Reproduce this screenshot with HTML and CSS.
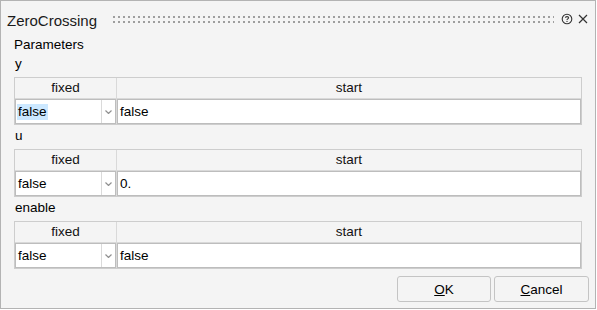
FILE: index.html
```html
<!DOCTYPE html>
<html>
<head>
<meta charset="utf-8">
<link rel="stylesheet" href="styles.css">
</head>
<body>
<div class="window">
  <div class="titlebar">
    <span class="title">ZeroCrossing</span>
    <svg class="grip" height="7" preserveAspectRatio="none">
      <defs>
        <pattern id="dots" width="5" height="5" patternUnits="userSpaceOnUse">
          <rect x="0" y="0" width="2" height="2" fill="#9e9e9e"/>
        </pattern>
      </defs>
      <rect x="0" y="0" width="100%" height="7" fill="url(#dots)"/>
    </svg>
    <svg class="help" width="12" height="12" viewBox="0 0 12 12">
      <circle cx="6" cy="6" r="4.8" fill="none" stroke="#333" stroke-width="1.1"/>
      <path d="M4.4 4.8 C4.4 3.2 7.6 3.2 7.6 4.8 C7.6 6 6 5.8 6 7.1" fill="none" stroke="#333" stroke-width="1.1"/>
      <rect x="5.45" y="7.9" width="1.1" height="1.1" fill="#333"/>
    </svg>
    <svg class="close" width="12" height="12" viewBox="0 0 12 12">
      <path d="M2 2 L10 10 M10 2 L2 10" stroke="#333" stroke-width="1.2" fill="none"/>
    </svg>
  </div>
  <div class="content">
    <div class="section">Parameters</div>

    <div class="label">y</div>
    <div class="ptable">
      <div class="hcell">fixed</div>
      <div class="hcell">start</div>
      <div class="combo"><span class="val selected">false</span><span class="arrow"><svg width="7" height="4" viewBox="0 0 7 4"><path d="M0.5 0.5 L3.5 3.5 L6.5 0.5" fill="none" stroke="#909090" stroke-width="1.2"/></svg></span></div>
      <div class="field">false</div>
    </div>

    <div class="label">u</div>
    <div class="ptable">
      <div class="hcell">fixed</div>
      <div class="hcell">start</div>
      <div class="combo"><span class="val">false</span><span class="arrow"><svg width="7" height="4" viewBox="0 0 7 4"><path d="M0.5 0.5 L3.5 3.5 L6.5 0.5" fill="none" stroke="#909090" stroke-width="1.2"/></svg></span></div>
      <div class="field">0.</div>
    </div>

    <div class="label">enable</div>
    <div class="ptable">
      <div class="hcell">fixed</div>
      <div class="hcell">start</div>
      <div class="combo"><span class="val">false</span><span class="arrow"><svg width="7" height="4" viewBox="0 0 7 4"><path d="M0.5 0.5 L3.5 3.5 L6.5 0.5" fill="none" stroke="#909090" stroke-width="1.2"/></svg></span></div>
      <div class="field">false</div>
    </div>

    <div class="buttons">
      <button class="btn btn-ok"><u>O</u>K</button>
      <button class="btn btn-cancel"><u>C</u>ancel</button>
    </div>
  </div>
</div>
</body>
</html>
```

FILE: styles.css
```css
html, body {
  margin: 0;
  padding: 0;
}
body {
  background: #ffffff;
  font-family: "Liberation Sans", Arial, sans-serif;
  font-size: 13.5px;
  color: #000;
}
.window {
  width: 596px;
  height: 309px;
  box-sizing: border-box;
  border: 1px solid #b3b3b3;
  background: #f4f4f4;
  display: flex;
  flex-direction: column;
}
.titlebar {
  height: 34px;
  flex: none;
  display: flex;
  align-items: flex-start;
  padding: 0 6px 0 6px;
}
.title {
  font-size: 15px;
  line-height: 17px;
  margin-top: 11px;
  color: #1a1a1a;
  white-space: nowrap;
}
.grip {
  flex: 1;
  min-width: 0;
  margin: 15px 7px 0 16px;
  height: 7px;
}
.help {
  margin-top: 12px;
  margin-right: 4px;
}
.close {
  margin-top: 12px;
}
.content {
  flex: 1;
  display: flex;
  flex-direction: column;
  padding: 2px 13px 0 13px;
}
.section {
  line-height: 16px;
}
.label {
  line-height: 16px;
  padding: 3px 1px 5px 1px;
}
.ptable {
  display: grid;
  grid-template-columns: 101px 1fr;
  grid-template-rows: 20px 25px;
  gap: 1px;
  border: 1px solid #cdcdcd;
  background: #d9d9d9;
}
.hcell {
  background: #f4f4f4;
  text-align: center;
  line-height: 20px;
  color: #111;
}
.combo, .field {
  background: #fff;
  border: 1px solid #bdbdbd;
  box-sizing: border-box;
  display: flex;
  align-items: center;
}
.combo {
  padding-left: 1px;
}
.val {
  flex: 1;
  line-height: 16px;
}
.val.selected {
  flex: none;
  background: #cce8ff;
  padding: 0 1px;
  margin-right: auto;
}
.val:not(.selected) {
  padding-left: 1px;
}
.arrow {
  width: 13px;
  align-self: stretch;
  border-left: 1px solid #dadada;
  display: flex;
  align-items: center;
  justify-content: center;
}
.field {
  padding-left: 2px;
}
.buttons {
  display: flex;
  justify-content: flex-end;
  gap: 3px;
  margin-top: 7px;
  margin-right: -7px;
}
.btn {
  height: 26px;
  box-sizing: border-box;
  border: 1px solid #c4c4c4;
  border-radius: 3px;
  background: #f4f4f4;
  font-family: "Liberation Sans", Arial, sans-serif;
  font-size: 13.5px;
  color: #000;
  padding: 0;
}
.btn-ok {
  width: 94px;
}
.btn-cancel {
  width: 95px;
}
```
